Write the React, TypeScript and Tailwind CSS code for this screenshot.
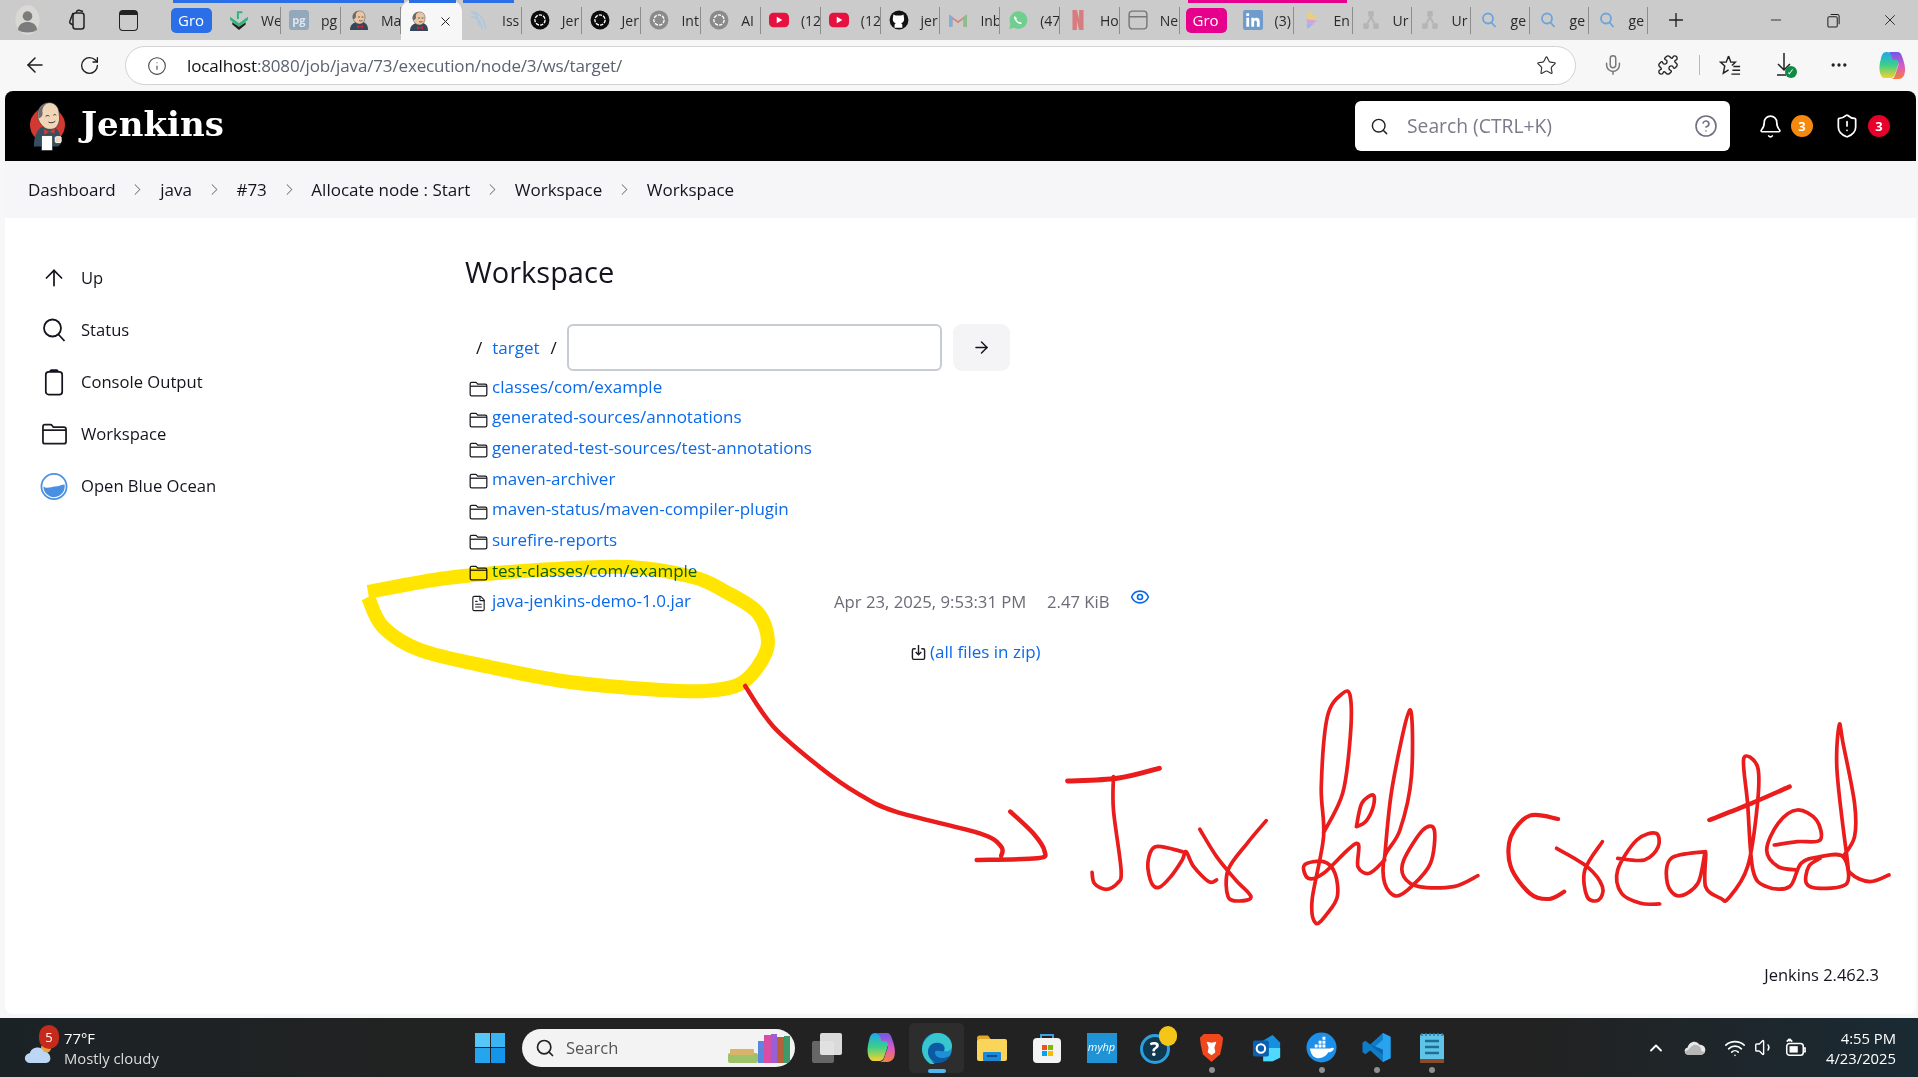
import React from "react";
import { ArrowLeft, ArrowRight, ArrowUp, RotateCw, Info, Star, Mic, Puzzle, MoreHorizontal, Search, CircleHelp, Bell, ShieldAlert, ChevronRight, Plus, Minus, X, Eye, ChevronUp, Volume1, Wifi, FileText } from "lucide-react";

const JenkinsLogo = ({ className = "" }: { className?: string }) => (
  <svg viewBox="0 0 38 50" className={className}>
    <circle cx="19" cy="24" r="18" fill="#d33833" />
    <path d="M5 46c0-10 3-17 8-20l13 0c5 3 7 9 7 17l-3 3z" fill="#335061" />
    <path d="M9 14C9 5 15 1 21 1s10 5 10 12c1 5 0 11-4 14-3 2-9 2-12-1-3-3-6-6-6-12z" fill="#f0d6b7" stroke="#3a3a3a" strokeWidth="0.7" />
    <path d="M10 17C8 8 13 2 20 1c-5 2-7 6-6 11 0 3-2 5-4 5z" fill="#6d6b6d" />
    <path d="M17 15c2-1 3-1 4 0M25 14c1-1 2-1 3 0M20 21c2 1 5 1 7-1" stroke="#222" strokeWidth="0.9" fill="none" />
    <path d="M15 28l6 3 6-4-1 6-5-2-5 3z" fill="#d33833" />
    <rect x="13" y="35" width="11" height="15" fill="#fff" stroke="#333" strokeWidth="0.6" />
    <rect x="27" y="36" width="6" height="6" rx="1" fill="#f0d6b7" stroke="#fff" />
  </svg>
);

const JenkinsFav = () => (
  <svg viewBox="0 0 20 20" className="w-[20px] h-[20px] shrink-0">
    <path d="M1 20c0-5 3-7 6-8h7c3 1 5 3 5 8z" fill="#33465a" />
    <path d="M4 7C4 3 7 1 10.500 1S16 3 16 7c0 4-2 7-5.500 7S4 11 4 7z" fill="#eac6a4" stroke="#4a4a4a" strokeWidth="0.5" />
    <path d="M4 9C2.500 4 6 1 10 1 7 2 6.500 4 7 6c0 2-1 3-3 3z" fill="#6a6a6a" />
    <path d="M8 15l3 1.500L14 15v3.500l-3-1.500-3 1.500z" fill="#d8222a" />
    <path d="M9 7h2M12.500 7h2M10 10.500c1 .6 2.500.6 3.500 0" stroke="#333" strokeWidth="0.7" fill="none" />
  </svg>
);

const FolderIcon = ({ className = "" }: { className?: string }) => (
  <svg viewBox="0 0 24 20" fill="none" stroke="#1b1b22" strokeWidth="1.6" strokeLinejoin="round" className={className}>
    <path d="M1.5 17V3.5c0-1 .7-2 1.8-2h5c.8 0 1.2.3 1.7 1l1 1.3h9.5c1 0 2 .8 2 2V17c0 1-1 1.8-2 1.8H3.3c-1 0-1.8-.8-1.8-1.8z" />
    <path d="M1.5 6.5h21" />
  </svg>
);

const Copilot = ({ id, className }: { id: string; className: string }) => (
  <svg viewBox="0 0 28 30" className={className}>
    <defs>
      <linearGradient id={`${id}a`} x1="0" y1="0" x2="0" y2="1"><stop offset="0" stopColor="#1fa6ee" /><stop offset="0.5" stopColor="#3ccf8a" /><stop offset="1" stopColor="#f6d32d" /></linearGradient>
      <linearGradient id={`${id}b`} x1="0" y1="0" x2="0" y2="1"><stop offset="0" stopColor="#6a5ae8" /><stop offset="0.5" stopColor="#d858c8" /><stop offset="1" stopColor="#f5803c" /></linearGradient>
    </defs>
    <path d="M8 1c-4 0-5 3-6 7-2 7-2 13 0 17 1 2 2 3 4 3h6c3 0 4-2 5-5l4-12c1-3-1-5-3-5h-3c-2 0-2-5-7-5z" fill={`url(#${id}a)`} />
    <path d="M10 1h9c3 0 4 2 5 5 3 8 4 14 2 19-1 2-3 4-6 4h-8c3 0 4-2 5-5l3-9c1-3 0-6-3-6h-3c-1-4-2-7-4-8z" fill={`url(#${id}b)`} />
  </svg>
);

const Chrome = ({ c }: { c: string }) => <circle cx="9" cy="9" r="8.5" fill={c} />;
const Fav = ({ kind }: { kind: string }) => {
  const cn = "w-[20px] h-[20px] shrink-0";
  if (kind === "jenkins") return <JenkinsFav />;
  if (kind === "gpt" || kind === "gptg")
    return (
      <svg viewBox="0 0 18 18" className={cn}>
        <Chrome c={kind === "gpt" ? "#0b0b0b" : "#8a8a8a"} />
        <circle cx="9" cy="9" r="4.6" fill="none" stroke="#fff" strokeWidth="1.2" strokeDasharray="3 1" />
      </svg>
    );
  if (kind === "yt")
    return (
      <svg viewBox="0 0 18 18" className={cn}>
        <rect x="0" y="2.5" width="18" height="13" rx="4" fill="#e6113f" />
        <path d="M7 6l5 3-5 3z" fill="#fff" />
      </svg>
    );
  if (kind === "gh")
    return (
      <svg viewBox="0 0 18 18" className={cn}>
        <Chrome c="#111" />
        <path d="M5 16v-3l1-1c-2-1-3-2-2.500-5l.5-3 2 1h5l2-1 .5 3c.5 3-.5 4-2.500 5l1 1v3z" fill="#fff" />
      </svg>
    );
  if (kind === "we")
    return (
      <svg viewBox="0 0 18 18" className={cn}>
        <path d="M1 6l8 6 8-6v3l-8 6-8-6z" fill="#2fb67a" />
        <path d="M3 11l6 4 6-4v2l-6 5-6-5z" fill="#222" />
        <path d="M8 8V2h4" stroke="#2fb67a" strokeWidth="1.800" fill="none" />
      </svg>
    );
  if (kind === "pg")
    return (
      <svg viewBox="0 0 18 18" className={cn}>
        <rect width="18" height="18" rx="3" fill="#94a8bb" />
        <text x="9" y="12.500" fontSize="10" fontWeight="700" textAnchor="middle" fill="#dfe6ec">pg</text>
      </svg>
    );
  if (kind === "iss")
    return (
      <svg viewBox="0 0 18 18" fill="none" stroke="#a9c8de" strokeWidth="1.3" className={cn}>
        <path d="M1 2c7 0 12 6 13 15M1 6c5 0 9 4 10 11M2 2c4 2 6 6 6 12" />
      </svg>
    );
  if (kind === "gmail")
    return (
      <svg viewBox="0 0 18 18" className={cn}>
        <path d="M1 15V4l8 6 8-6v11h-3V8l-5 4-5-4v7z" fill="#d9857c" />
        <path d="M1 4l3 2v9H1z" fill="#7fb1d8" />
        <path d="M14 6l3-2v11h-3z" fill="#85c08d" />
      </svg>
    );
  if (kind === "wa")
    return (
      <svg viewBox="0 0 18 18" className={cn}>
        <path d="M1 17l1.200-4.500A8 8 0 1 1 5.500 16z" fill="#6fcf8e" />
        <path d="M6 5.500c-1 1-.5 3 1.500 5s4 2.500 5 1.500l-1.500-1.500-1 .5c-1-.5-2-1.500-2.500-2.500l.5-1z" fill="#fff" />
      </svg>
    );
  if (kind === "nf")
    return (
      <svg viewBox="0 0 18 18" className={cn}>
        <path d="M4 0h4l2 8V0h4v18h-4L8 10v8H4z" fill="#d97c80" />
      </svg>
    );
  if (kind === "ne")
    return (
      <svg viewBox="0 0 18 18" fill="none" stroke="#777" strokeWidth="1.3" className={cn}>
        <rect x="1" y="1" width="16" height="16" rx="3" />
        <path d="M1 6h16M6 11h.01M9 11h.01M12 11h.01" />
      </svg>
    );
  if (kind === "li")
    return (
      <svg viewBox="0 0 18 18" className={cn}>
        <rect width="18" height="18" rx="2" fill="#6f9ccc" />
        <path d="M3 7h2.500v8H3zM3 3h2.500v2.500H3zM7.500 7H10v1c1-1.500 5-1.800 5 2v5h-2.500v-4c0-2-2.500-2-2.500 0v4H7.500z" fill="#fff" />
      </svg>
    );
  if (kind === "en")
    return (
      <svg viewBox="0 0 18 18" className={cn}>
        <path d="M5 1l9 6-9 3z" fill="#e9cf7b" />
        <path d="M4 8l10 2-9 4z" fill="#d9a0e0" />
        <path d="M4 13l7-1-6 5z" fill="#9db7ea" />
      </svg>
    );
  if (kind === "ur")
    return (
      <svg viewBox="0 0 18 18" fill="#b5b5b5" className={cn}>
        <rect x="6.500" y="1" width="5" height="5" rx="1" />
        <rect x="2" y="12" width="5" height="5" rx="1" />
        <rect x="11" y="12" width="5" height="5" rx="1" />
        <path d="M8 6l-3 6h2l2-4 2 4h2l-3-6z" />
      </svg>
    );
  return (
    <svg viewBox="0 0 18 18" fill="none" stroke="#6ea4d8" strokeWidth="1.800" className="w-[18px] h-[18px] shrink-0">
      <circle cx="8" cy="7.500" r="5" />
      <path d="M11.500 11.500l4 4.500" />
    </svg>
  );
};

const Tab = ({ kind, label, w }: { kind: string; label: string; w: string }) => (
  <div className={`${w} h-[27px] flex items-center pl-[8px] border-r border-[#8d8d8d] overflow-hidden shrink-0`}>
    <div className="w-[20px] flex justify-center shrink-0"><Fav kind={kind} /></div>
    <span className="ml-[12px] text-[14px] text-[#2a2a2a] whitespace-nowrap">{label}</span>
  </div>
);

const TabBar = () => {
  const a = [["we", "We"], ["pg", "pg"], ["jenkins", "Ma"]];
  const b = [["iss", "Iss"], ["gpt", "Jer"], ["gpt", "Jer"], ["gptg", "Int"], ["gptg", "AI"], ["yt", "(12"], ["yt", "(12"], ["gh", "jer"], ["gmail", "Inb"], ["wa", "(47"], ["nf", "Ho"], ["ne", "Ne"]];
  const c = [["li", "(3)"], ["en", "En"], ["ur", "Ur"], ["ur", "Ur"], ["q", "ge"], ["q", "ge"], ["q", "ge"]];
  return (
    <div className="h-[40px] flex items-center bg-[#cbcbcb] shrink-0 relative">
      <svg viewBox="0 0 26 32" className="ml-[15px] w-[25px] h-[32px] shrink-0">
        <ellipse cx="13" cy="16" rx="12.500" ry="15.500" fill="#dad8d4" />
        <circle cx="13" cy="12" r="5" fill="#7c7c7c" />
        <path d="M3 26c1-6 5-8 10-8s9 2 10 8c-3 4-17 4-20 0z" fill="#7c7c7c" />
      </svg>
      <svg viewBox="0 0 24 24" fill="none" stroke="#222" strokeWidth="1.500" className="ml-[25px] w-[24px] h-[24px] shrink-0">
        <rect x="8" y="5" width="11" height="16" rx="2.500" />
        <path d="M8 17l-2.500-1.500c-.8-.5-1-1-.7-2L8 5M11 5l1-2c.5-.8 1-1 2-.8l4 1.300" />
      </svg>
      <div className="ml-[30px] w-[19px] h-[21px] rounded-[4px] border-[1.500px] border-[#222] border-t-[5px] shrink-0" />
      <div className="ml-[33px] w-[41px] h-[25px] rounded-[5px] bg-[#2b6fe8] text-white text-[15px] pl-[7px] leading-[25px] overflow-hidden shrink-0">Gro</div>
      <div className="ml-[9px] flex items-center shrink-0">
        {a.map(([k, l], i) => <Tab key={i} kind={k} label={l} w="w-[60px]" />)}
        <div className="w-[61px] h-[40px] bg-[#f7f7f7] rounded-t-[12px] flex items-center pl-[8px] pt-[2px] shrink-0">
          <JenkinsFav />
          <X size={15} strokeWidth={1.6} className="ml-[9px] text-[#222]" />
        </div>
        {b.map(([k, l], i) => <Tab key={i} kind={k} label={l} w="w-[59.800px]" />)}
      </div>
      <div className="ml-[6px] w-[41px] h-[25px] rounded-[5px] bg-[#e6008c] text-white text-[15px] pl-[7px] leading-[25px] overflow-hidden shrink-0">Gro</div>
      <div className="ml-[8px] flex items-center shrink-0">
        {c.map(([k, l], i) => <Tab key={i} kind={k} label={l} w="w-[59px]" />)}
      </div>
      <Plus size={22} strokeWidth={1.5} className="ml-[17px] text-[#222] shrink-0" />
      <Minus size={16} strokeWidth={1.3} className="ml-[81px] text-[#222] shrink-0" />
      <svg viewBox="0 0 16 16" fill="none" stroke="#222" strokeWidth="1.100" className="ml-[42px] w-[15px] h-[15px] shrink-0">
        <rect x="2" y="4" width="10" height="11" rx="1.500" />
        <path d="M5 1.500h7c1.500 0 2 .8 2 2V12" />
      </svg>
      <X size={18} strokeWidth={1.2} className="ml-[40px] text-[#222] shrink-0" />
      <div className="absolute left-[173px] top-0 w-[231px] h-[3px] bg-[#2b6fe8]" />
      <div className="absolute left-[409px] top-0 w-[47px] h-[3px] bg-[#2b6fe8]" />
      <div className="absolute left-[463px] top-0 w-[51px] h-[3px] bg-[#2b6fe8]" />
      <div className="absolute left-[1188px] top-0 w-[159px] h-[3px] bg-[#e6008c]" />
    </div>
  );
};

const AddressBar = () => (
  <div className="h-[50px] bg-[#f7f7f7] flex items-center shrink-0">
    <ArrowLeft size={24} strokeWidth={1.5} className="ml-[23px] text-[#1c1c1c] shrink-0" />
    <RotateCw size={21} strokeWidth={1.5} className="ml-[32px] text-[#1c1c1c] shrink-0" />
    <div className="ml-[25px] w-[1451px] h-[39px] mt-[1px] bg-white rounded-full border border-[#d2d2d2] flex items-center shrink-0">
      <Info size={20} strokeWidth={1.3} className="ml-[21px] text-[#444] shrink-0" />
      <span className="ml-[20px] text-[17px] tracking-[-0.15px] text-[#5b6370] whitespace-nowrap"><span className="text-[#111]">localhost</span>:8080/job/java/73/execution/node/3/ws/target/</span>
      <Star size={21} strokeWidth={1.3} className="ml-auto mr-[18px] text-[#333] shrink-0" />
    </div>
    <Mic size={22} strokeWidth={1.6} className="ml-[26px] text-[#777] shrink-0" />
    <Puzzle size={22} strokeWidth={1.5} className="ml-[33px] text-[#222] shrink-0" />
    <div className="ml-[20px] w-px h-[20px] bg-[#bbb] shrink-0" />
    <svg viewBox="0 0 24 24" fill="none" stroke="#222" strokeWidth="1.500" className="ml-[19px] w-[23px] h-[23px] shrink-0">
      <path d="M10 2l2.300 6.500h4.700l-3.500 3.500M10 2L7.500 8.500H1.500l4.500 4-1.500 7.500 5.500-3.500M15 13h7M14 17h8M13 21h9" />
    </svg>
    <div className="ml-[31px] relative w-[24px] h-[26px] shrink-0">
      <svg viewBox="0 0 24 26" fill="none" stroke="#222" strokeWidth="1.500" className="w-[24px] h-[26px]">
        <path d="M11 1v17M5 12l6 6 6-6M4 23h9" />
      </svg>
      <div className="absolute right-0 bottom-0 w-[12px] h-[12px] rounded-full bg-[#0f8a44] text-white text-[9px] leading-[12px] text-center">✓</div>
    </div>
    <MoreHorizontal size={20} className="ml-[32px] text-[#222] shrink-0" />
    <Copilot id="copa" className="ml-[30px] w-[27px] h-[29px] shrink-0" />
  </div>
);

const Header = () => (
  <div className="h-[70px] bg-black flex items-center shrink-0">
    <JenkinsLogo className="ml-[24px] w-[37px] h-[50px] shrink-0" />
    <span className="ml-[15px] mb-[4px] text-white text-[34px] font-bold leading-none font-['DejaVu_Serif',serif]">Jenkins</span>
    <div className="ml-auto w-[375px] h-[50px] bg-white rounded-[6px] flex items-center shrink-0">
      <Search size={19} strokeWidth={1.800} className="ml-[15px] text-[#222] shrink-0" />
      <span className="ml-[18px] text-[19.300px] text-[#7b7b8a] whitespace-nowrap">Search (CTRL+K)</span>
      <CircleHelp size={24} strokeWidth={1.6} className="ml-auto mr-[12px] text-[#6f6f80] shrink-0" />
    </div>
    <Bell size={25} strokeWidth={1.6} className="ml-[28px] text-white shrink-0" />
    <span className="ml-[8px] w-[22px] h-[22px] rounded-full bg-[#f5890f] text-white text-[13px] font-bold leading-[22px] text-center shrink-0">3</span>
    <ShieldAlert size={26} strokeWidth={1.6} className="ml-[21px] text-white shrink-0" />
    <span className="ml-[8px] w-[22px] h-[22px] rounded-full bg-[#e6002a] text-white text-[13px] font-bold leading-[22px] text-center shrink-0">3</span>
    <div className="w-[26px] shrink-0" />
  </div>
);

const Crumbs = () => {
  const items = ["Dashboard", "java", "#73", "Allocate node : Start", "Workspace", "Workspace"];
  return (
    <div className="h-[57px] bg-[#f6f6f8] flex items-center pl-[23px] shrink-0">
      {items.map((t, i) => (
        <React.Fragment key={i}>
          {i > 0 && <ChevronRight size={19} strokeWidth={1.3} className="mx-[12.750px] text-[#777] shrink-0" />}
          <span className="text-[17px] text-[#14141f] font-medium whitespace-nowrap">{t}</span>
        </React.Fragment>
      ))}
    </div>
  );
};

const SideItem = ({ icon, label }: { icon: React.ReactNode; label: string }) => (
  <div className="h-[52px] flex items-center">
    <div className="w-[28px] h-[32px] flex items-center justify-center shrink-0">{icon}</div>
    <span className="ml-[13px] text-[16.600px] text-[#14141f]">{label}</span>
  </div>
);

const Sidebar = () => (
  <div className="w-[460px] pl-[35px] pt-[34px] shrink-0">
    <SideItem label="Up" icon={<ArrowUp size={26} strokeWidth={1.6} className="text-[#14141f]" />} />
    <SideItem label="Status" icon={<svg viewBox="0 0 26 26" fill="none" stroke="#14141f" strokeWidth="1.800" className="w-[26px] h-[26px]"><circle cx="11.500" cy="11" r="8.500" /><path d="M17.500 17.500l6 6.500" /></svg>} />
    <SideItem label="Console Output" icon={<svg viewBox="0 0 20 28" fill="none" stroke="#14141f" strokeWidth="1.800" className="w-[20px] h-[27px]"><rect x="1.500" y="3" width="17" height="23.500" rx="3" /><path d="M6 3c0-1 .5-1.800 1.500-1.800h5c1 0 1.500.8 1.500 1.800" /></svg>} />
    <SideItem label="Workspace" icon={<FolderIcon className="w-[27px] h-[22px]" />} />
    <SideItem label="Open Blue Ocean" icon={
      <svg viewBox="0 0 28 30" className="w-[29px] h-[29px]">
        <circle cx="14" cy="15" r="13" fill="#fff" stroke="#4a90e2" strokeWidth="1.800" />
        <path d="M3 15c4 3 8 0 12 0 4 0 7-2 10-2 1 7-4 13-11 13C8 26 3 21 3 15z" fill="#4a90e2" />
      </svg>
    } />
  </div>
);

const LINK = "text-[17px] text-[#0b6aea] font-medium whitespace-nowrap";
const dirs = [
  "classes/com/example",
  "generated-sources/annotations",
  "generated-test-sources/test-annotations",
  "maven-archiver",
  "maven-status/maven-compiler-plugin",
  "surefire-reports",
  "test-classes/com/example",
];

const Main = () => (
  <div className="flex-1 pt-[35px]">
    <h1 className="h-[40px] leading-[38px] text-[29px] font-medium text-[#14141f]">Workspace</h1>
    <div className="mt-[31px] h-[47px] flex items-center">
      <span className="ml-[11px] text-[17px] text-[#14141f]">/</span>
      <span className={`ml-[10px] ${LINK}`}>target</span>
      <span className="ml-[11px] text-[17px] text-[#14141f]">/</span>
      <div className="ml-[10px] w-[375px] h-[47px] rounded-[6px] border-2 border-[#c6ccd1] bg-white shrink-0" />
      <div className="ml-[11px] w-[57px] h-[47px] rounded-[9px] bg-[#f4f4f6] flex items-center justify-center shrink-0">
        <ArrowRight size={19} strokeWidth={1.8} className="text-[#14141f]" />
      </div>
    </div>
    <div>
      {dirs.map((d) => (
        <div key={d} className="h-[30.700px] flex items-center">
          <FolderIcon className="ml-[4px] mt-[5px] w-[19px] h-[16px] shrink-0" />
          <span className={`ml-[4px] ${LINK}`}>{d}</span>
        </div>
      ))}
      <div className="h-[30.700px] flex items-center">
        <div className="w-[369px] flex items-center shrink-0">
          <FileText size={17} strokeWidth={1.6} className="ml-[5px] mt-[5px] text-[#1b1b22] shrink-0" />
          <span className={`ml-[5px] ${LINK}`}>java-jenkins-demo-1.0.jar</span>
        </div>
        <span className="w-[213px] text-[16.700px] text-[#6c6c78] whitespace-nowrap shrink-0">Apr 23, 2025, 9:53:31 PM</span>
        <span className="w-[83px] text-[16.700px] text-[#6c6c78] whitespace-nowrap shrink-0">2.47 KiB</span>
        <Eye size={20} strokeWidth={2} className="mb-[8px] text-[#0b6aea] shrink-0" />
      </div>
    </div>
    <div className="mt-[23px] ml-[446px] h-[24px] flex items-center">
      <svg viewBox="0 0 16 18" fill="none" stroke="#1b1b22" strokeWidth="1.500" className="w-[15px] h-[17px] mt-[2px] shrink-0">
        <path d="M5 5H3c-1 0-1.500.7-1.500 1.500v8c0 1 .7 1.800 1.500 1.800h10c1 0 1.500-.8 1.500-1.800v-8C14.500 5.700 14 5 13 5h-2M8 1v10M5 8.500L8 11.500l3-3" />
      </svg>
      <span className={`ml-[4px] ${LINK} text-[17.400px]`}>(all files in zip)</span>
    </div>
  </div>
);

const smooth = (p: number[][]) => {
  let d = `M${p[0][0]} ${p[0][1]}`;
  for (let i = 0; i < p.length - 1; i++) {
    const a = p[Math.max(i - 1, 0)], b = p[i], c = p[i + 1], e = p[Math.min(i + 2, p.length - 1)];
    d += ` C${b[0] + (c[0] - a[0]) / 6} ${b[1] + (c[1] - a[1]) / 6} ${c[0] - (e[0] - b[0]) / 6} ${c[1] - (e[1] - b[1]) / 6} ${c[0]} ${c[1]}`;
  }
  return d;
};

const yellow = [[368, 592], [447, 578], [538, 570], [629, 567], [693, 577], [726, 592], [758, 613], [768, 643], [757, 668], [738, 685], [705, 691], [661, 690], [570, 682], [490, 667], [420, 650], [383, 627], [368, 597]];

const red: [number[][], number][] = [
  [[[33, 48], [70, 170], [130, 290], [180, 370], [230, 425], [340, 490], [368, 530], [368, 558]], 4.5],
  [[[380, 425], [410, 490], [425, 545], [415, 565], [336, 570]], 4.5],
  [[[455, 333], [520, 325], [575, 295]], 5],
  [[[515, 320], [515, 420], [525, 600], [520, 640], [505, 658], [490, 640], [487, 607]], 3.7],
  [[[605, 545], [570, 530], [560, 580], [565, 640], [575, 652], [590, 620], [605, 570], [610, 545], [620, 590], [640, 635], [650, 630]], 3.7],
  [[[628, 478], [650, 560], [675, 630], [695, 680], [680, 693], [665, 680], [665, 600], [690, 520], [715, 452]], 3.7],
  [[[790, 488], [815, 370], [825, 200], [825, 80], [815, 70], [795, 140], [787, 350], [790, 500], [775, 690], [780, 760], [795, 730], [808, 680], [805, 610], [790, 575], [765, 585], [770, 625], [790, 610], [833, 520], [835, 590], [850, 610], [870, 570]], 3.7],
  [[[833, 470], [840, 400], [855, 375], [855, 410], [845, 455], [833, 470]], 3.7],
  [[[870, 560], [880, 350], [903, 120], [905, 320], [890, 480], [870, 560], [870, 640], [885, 678], [905, 650], [930, 580], [935, 480], [920, 480], [895, 570], [895, 620], [915, 650], [960, 650], [992, 617]], 3.7],
  [[[1097, 447], [1060, 437], [1035, 500], [1035, 590], [1060, 670], [1085, 687], [1105, 665]], 4.2],
  [[[1095, 535], [1135, 590], [1155, 650], [1150, 690], [1135, 680], [1132, 600], [1155, 515]], 3.7],
  [[[1175, 565], [1210, 570], [1228, 530], [1225, 490], [1200, 510], [1175, 600], [1180, 670], [1205, 700], [1230, 702]], 3.7],
  [[[1290, 545], [1245, 565], [1240, 640], [1255, 678], [1280, 640], [1290, 545], [1290, 650], [1310, 685], [1320, 685], [1345, 590], [1358, 400], [1358, 290], [1340, 265], [1345, 400], [1352, 600], [1370, 650], [1400, 650], [1415, 580], [1440, 560], [1470, 560], [1475, 640], [1440, 655], [1422, 640], [1425, 590], [1440, 565]], 3.7],
  [[[1295, 450], [1350, 400], [1400, 350]], 4.5],
  [[[1380, 525], [1410, 515], [1440, 510], [1435, 450], [1410, 420], [1385, 460], [1370, 540], [1385, 590], [1410, 600]], 3.7],
  [[[1470, 560], [1485, 500], [1485, 400], [1470, 220], [1465, 165], [1462, 300], [1475, 560], [1480, 610], [1505, 635], [1530, 615]], 3.7],
];

const Annotation = () => (
  <svg viewBox="0 0 1918 1077" className="absolute inset-0 w-[1918px] h-[1077px] pointer-events-none">
    <path d={smooth(yellow)} fill="none" stroke="#ffe500" strokeWidth="14" strokeLinejoin="round" strokeLinecap="butt" style={{ mixBlendMode: "multiply" }} />
    <g transform="translate(720 670) scale(0.7640 0.3333)">
      {red.map(([p, w], i) => (
        <path key={i} d={smooth(p)} fill="none" stroke="#ea1c1c" strokeWidth={w} strokeLinecap="round" strokeLinejoin="round" vectorEffect="non-scaling-stroke" />
      ))}
    </g>
  </svg>
);

const Slot = ({ children, dot = false, active = false }: { children: React.ReactNode; dot?: boolean; active?: boolean }) => (
  <div className={`w-[55px] h-[50px] flex items-center justify-center relative shrink-0 rounded-[5px] ${active ? "bg-[#2d2d2d]" : ""}`}>
    {children}
    {dot && <div className="absolute bottom-[0px] w-[6px] h-[6px] rounded-full bg-[#8f8f8f]" />}
    {active && <div className="absolute bottom-[0px] w-[18px] h-[4px] rounded-full bg-[#4fb6ee]" />}
  </div>
);

const Taskbar = () => (
  <div className="h-[59px] shrink-0 flex items-center text-white bg-[linear-gradient(90deg,#1b2226_0%,#1f2224_12%,#222_25%,#222_80%,#1a2a33_100%)]">
    <div className="w-[490px] -mr-[15px] flex items-center shrink-0 relative">
      <svg viewBox="0 0 32 24" className="ml-[24px] w-[32px] h-[24px] mt-[8px] shrink-0">
        <circle cx="22" cy="8" r="5" fill="#e8a33c" />
        <path d="M7 23c-8 0-8-9-1-10 1-6 12-8 14-1 7-1 9 11 2 11z" fill="#bcd7f5" />
      </svg>
      <div className="absolute left-[39px] top-[-3px] w-[20px] h-[24px] rounded-full bg-[#c42b1c] text-[13px] leading-[24px] text-center">5</div>
      <div className="ml-[8px] leading-[20px]">
        <div className="text-[14.800px]">77°F</div>
        <div className="text-[14.800px] text-[#dcdcdc]">Mostly cloudy</div>
      </div>
    </div>
    <div className="w-[30px] h-[30px] grid grid-cols-2 gap-[1px] shrink-0">
      <div className="bg-[#55c8f8]" /><div className="bg-[#3ab4f2]" /><div className="bg-[#26a5ef]" /><div className="bg-[#1495ea]" />
    </div>
    <div className="ml-[17px] w-[273px] h-[38px] rounded-full bg-[#f3f3f3] flex items-center overflow-hidden shrink-0">
      <Search size={20} strokeWidth={2} className="ml-[13px] text-[#222] shrink-0" />
      <span className="ml-[11px] pt-[2px] text-[16.500px] text-[#555]">Search</span>
      <svg viewBox="0 0 64 30" className="ml-auto mr-[3px] w-[64px] h-[30px] shrink-0">
        <rect x="0" y="20" width="30" height="10" rx="2" fill="#9cc36a" />
        <rect x="2" y="16" width="24" height="6" rx="1" fill="#d8b36a" />
        <rect x="30" y="8" width="6" height="22" fill="#5a88e0" />
        <rect x="36" y="2" width="7" height="28" fill="#d84ea4" />
        <rect x="43" y="1" width="6" height="29" fill="#9a5fd6" />
        <rect x="49" y="4" width="7" height="26" fill="#b5623a" />
        <rect x="56" y="3" width="6" height="27" fill="#3f9a6a" />
      </svg>
    </div>
    <div className="ml-[4px] flex items-center shrink-0">
      <Slot><div className="relative w-[30px] h-[30px]"><div className="absolute left-0 bottom-0 w-[22px] h-[22px] bg-[#666] rounded-[2px]" /><div className="absolute right-0 top-0 w-[22px] h-[22px] bg-[#eee] rounded-[2px] opacity-90" /></div></Slot>
      <Slot><Copilot id="copb" className="w-[29px] h-[31px]" /></Slot>
      <Slot active>
        <svg viewBox="0 0 32 32" className="w-[32px] h-[32px]">
          <circle cx="16" cy="16" r="15" fill="#1e90d8" />
          <path d="M1 17C2 8 9 1 17 1c8 0 14 6 14 13 0 4-4 6-8 5 2-3 1-8-6-8-7 0-10 5-10 9 0 5 4 11 10 14C8 34 1 26 1 17z" fill="#37c6d0" />
          <path d="M7 20c0-7 6-10 11-9 5 1 6 5 5 8-6 1-9-2-9 2 0 4 7 8 16 2-3 5-8 8-14 8-5-2-9-6-9-11z" fill="#0c59a4" />
        </svg>
      </Slot>
      <Slot>
        <svg viewBox="0 0 30 30" className="w-[30px] h-[30px]">
          <path d="M0 5c0-1.500 1-2.500 2.500-2.500H11l3 4h-14z" fill="#e3a72b" />
          <rect y="6" width="30" height="22" rx="2" fill="#fbd45a" />
          <rect x="6" y="19" width="18" height="9" rx="1" fill="#1b88d8" />
          <rect x="10" y="22" width="10" height="2" fill="#0c4f90" />
        </svg>
      </Slot>
      <Slot>
        <svg viewBox="0 0 30 32" className="w-[30px] h-[32px]">
          <path d="M9 7V3h12v4" fill="none" stroke="#3f9fe0" strokeWidth="2" />
          <rect x="1" y="6" width="28" height="25" rx="4" fill="#f3f3f3" />
          <rect x="10" y="13" width="5" height="5" fill="#f25022" /><rect x="16" y="13" width="5" height="5" fill="#7fba00" /><rect x="10" y="19" width="5" height="5" fill="#00a4ef" /><rect x="16" y="19" width="5" height="5" fill="#ffb900" />
        </svg>
      </Slot>
      <Slot>
        <div className="w-[30px] h-[30px] bg-[#1f93d6] flex items-center justify-center text-[11px] italic text-white">myhp</div>
      </Slot>
      <Slot>
        <div className="relative w-[34px] h-[34px]">
          <div className="w-[30px] h-[30px] mt-[3px] rounded-full border-[3px] border-[#2aa0df] bg-[#10384f] flex items-center justify-center text-[20px] font-bold leading-none text-white">?</div>
          <div className="absolute right-[-3px] top-[-5px] w-[18px] h-[20px] rounded-full bg-[#f5c518]" />
        </div>
      </Slot>
      <Slot dot>
        <svg viewBox="0 0 28 32" className="w-[27px] h-[31px]">
          <path d="M6 2h16l4 4-1 8-2 9-9 8-9-8-2-9-1-8z" fill="#f1471d" />
          <path d="M9 10l5 1 5-1-2 6 1 5-4 3-4-3 1-5z" fill="#fff" />
        </svg>
      </Slot>
      <Slot>
        <svg viewBox="0 0 32 32" className="w-[30px] h-[30px]">
          <path d="M12 8l10-6 8 8v16l-8 4H12z" fill="#1490df" />
          <path d="M12 16h18v10l-8 4H12z" fill="#50d9ff" />
          <rect x="1" y="8" width="17" height="17" rx="2" fill="#0a5fb0" />
          <circle cx="9.500" cy="16.500" r="4.500" fill="none" stroke="#fff" strokeWidth="2.200" />
        </svg>
      </Slot>
      <Slot dot>
        <svg viewBox="0 0 32 32" className="w-[31px] h-[31px]">
          <circle cx="16" cy="16" r="15.500" fill="#1d8fe8" />
          <path d="M4 17h21c1-1 3-1 4 0-1 3-4 4-6 4-2 4-6 6-10 6-6 0-8-5-9-10z" fill="#fff" />
          <path d="M9 13h3v3H9zM13 13h3v3h-3zM17 13h3v3h-3zM13 9h3v3h-3zM17 9h3v3h-3zM17 5h3v3h-3z" fill="#fff" />
        </svg>
      </Slot>
      <Slot dot>
        <svg viewBox="0 0 30 32" className="w-[30px] h-[31px]">
          <path d="M21 1l8 4v22l-8 4L8 19l-5 4-3-2V11l3-2 5 4z" fill="#0e7cc9" />
          <path d="M21 1l8 4v22l-8 4zM21 8l-9 8 9 8z" fill="#2aa3ef" />
          <path d="M3 9l18 15v-6L8 13z" fill="#0b66a8" />
        </svg>
      </Slot>
      <Slot dot>
        <svg viewBox="0 0 24 32" className="w-[24px] h-[32px]">
          <rect y="2" width="24" height="28" rx="2" fill="#5fc4e8" />
          <rect y="27" width="24" height="4" fill="#8a4b2a" />
          <path d="M2 1v3M6 1v3M10 1v3M14 1v3M18 1v3M22 1v3" stroke="#2c7fa8" strokeWidth="1.500" />
          <path d="M5 9h14M5 15h14M5 21h14" stroke="#1d6f94" strokeWidth="2.500" />
        </svg>
      </Slot>
    </div>
    <ChevronUp size={20} strokeWidth={2.200} className="ml-[187px] shrink-0" />
    <svg viewBox="0 0 24 18" className="ml-[18px] w-[22px] h-[17px] shrink-0">
      <path d="M5 17c-5 0-6-7-1-8 1-6 9-9 13-3 5 0 7 4 6 7-1 3-3 4-5 4z" fill="#e8e8e8" />
      <path d="M12 6c4 0 7 3 7 7l4 1c-1 2-3 3-5 3H5c-2 0-4-1-4-4 4 0 7-7 11-7z" fill="#b7b7b7" />
    </svg>
    <Wifi size={22} strokeWidth={1.8} className="ml-[18px] shrink-0" />
    <Volume1 size={21} strokeWidth={1.6} className="ml-[8px] shrink-0" />
    <svg viewBox="0 0 24 24" fill="none" stroke="#fff" strokeWidth="1.700" className="ml-[9px] w-[22px] h-[22px] shrink-0">
      <rect x="3" y="7" width="18" height="13" rx="3" />
      <path d="M6 5V2M6 2l-3 3M6 2l3 3M21 12h2v4h-2" />
      <rect x="6" y="10" width="9" height="7" fill="#fff" stroke="none" />
    </svg>
    <div className="ml-auto mr-[22px] text-right leading-[20px] text-[14.800px] whitespace-nowrap">
      <div>4:55 PM</div>
      <div>4/23/2025</div>
    </div>
  </div>
);

export default function App() {
  return (
    <div className="w-[1918px] h-[1077px] relative overflow-hidden flex flex-col font-['Open_Sans','Noto_Sans',sans-serif]">
      <TabBar />
      <AddressBar />
      <div className="flex-1 min-h-0 bg-[#f7f7f7] pl-[5px] pr-[2px] pt-[1px] pb-[4px] flex">
        <div className="flex-1 min-w-0 bg-white rounded-[8px] overflow-hidden flex flex-col">
          <Header />
          <Crumbs />
          <div className="flex-1 min-h-0 flex">
            <Sidebar />
            <Main />
          </div>
          <div className="h-[24px] mb-[27px] pr-[37px] text-right text-[16.500px] text-[#14141f] shrink-0">Jenkins 2.462.3</div>
        </div>
      </div>
      <Taskbar />
      <Annotation />
    </div>
  );
}
